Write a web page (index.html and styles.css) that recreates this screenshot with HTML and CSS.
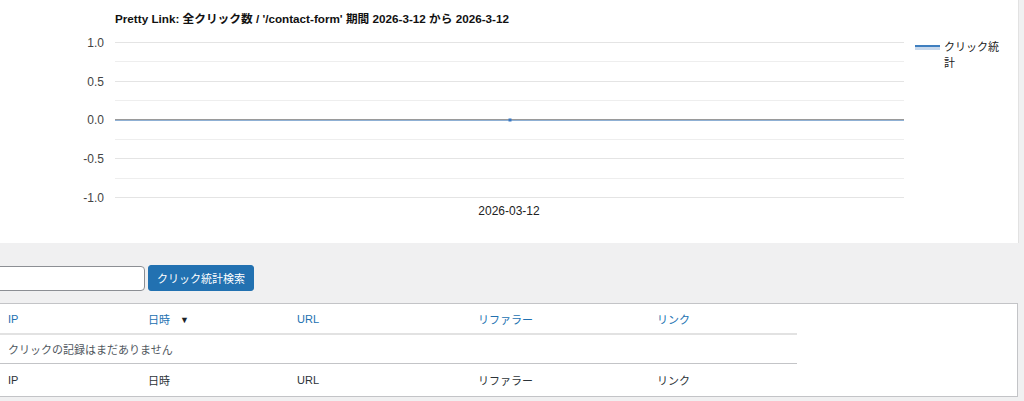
FILE: index.html
```html
<!DOCTYPE html>
<html lang="ja">
<head>
<meta charset="utf-8">
<title>Pretty Link クリック統計</title>
<link rel="stylesheet" href="styles.css">
</head>
<body>
<div class="chart-panel">
  <svg class="chart" width="1018" height="243" viewBox="0 0 1018 243" xmlns="http://www.w3.org/2000/svg">
    <text class="chart-title" x="115" y="23">Pretty Link: 全クリック数 / '/contact-form' 期間 2026-3-12 から 2026-3-12</text>
    <g class="grid">
      <line x1="115" y1="42.5" x2="904" y2="42.5"/>
      <line x1="115" y1="61.5" x2="904" y2="61.5" class="minor"/>
      <line x1="115" y1="81.5" x2="904" y2="81.5"/>
      <line x1="115" y1="100.5" x2="904" y2="100.5" class="minor"/>
      <line x1="115" y1="139.5" x2="904" y2="139.5" class="minor"/>
      <line x1="115" y1="158.5" x2="904" y2="158.5"/>
      <line x1="115" y1="178.5" x2="904" y2="178.5" class="minor"/>
      <line x1="115" y1="197.5" x2="904" y2="197.5"/>
    </g>
    <line class="zero" x1="115" y1="119.5" x2="904" y2="119.5"/>
    <line class="series" x1="115" y1="120.5" x2="904" y2="120.5"/>
    <rect class="point" x="508.5" y="118.5" width="3" height="3"/>
    <g class="ylab">
      <text x="104" y="47">1.0</text>
      <text x="104" y="86">0.5</text>
      <text x="104" y="124">0.0</text>
      <text x="104" y="163">-0.5</text>
      <text x="104" y="202">-1.0</text>
    </g>
    <text class="xlab" x="509" y="215">2026-03-12</text>
    <rect class="legend-swatch" x="915" y="46" width="25" height="4"/>
    <line class="legend-line" x1="915" y1="46" x2="940" y2="46"/>
    <text class="legend" x="944" y="51">クリック統</text>
    <text class="legend" x="944" y="67">計</text>
  </svg>
</div>

<div class="search">
  <input class="search-input" type="text" aria-label="検索">
  <button class="search-btn" type="button">クリック統計検索</button>
</div>

<div class="table-wrap">
  <table class="clicks">
    <thead>
      <tr>
        <th class="c-ip"><a>IP</a></th>
        <th class="c-date"><a>日時</a><span class="sort">▼</span></th>
        <th class="c-url"><a>URL</a></th>
        <th class="c-ref"><a>リファラー</a></th>
        <th class="c-link"><a>リンク</a></th>
      </tr>
    </thead>
    <tbody>
      <tr><td colspan="5" class="empty">クリックの記録はまだありません</td></tr>
    </tbody>
    <tfoot>
      <tr>
        <th>IP</th>
        <th>日時</th>
        <th>URL</th>
        <th>リファラー</th>
        <th>リンク</th>
      </tr>
    </tfoot>
  </table>
</div>
</body>
</html>
```
FILE: styles.css
```css
html, body {
  margin: 0;
  padding: 0;
}
body {
  background: #f0f0f1;
  font-family: "Liberation Sans", "Noto Sans CJK JP", sans-serif;
  color: #3c434a;
  width: 1024px;
  overflow: hidden;
}
.chart-panel {
  width: 1018px;
  height: 243px;
  background: #fff;
  border-right: 1px solid #e2e2e2;
}
.chart {
  display: block;
  font-family: "Liberation Sans", "Noto Sans CJK JP", sans-serif;
}
.chart-title {
  font-size: 11.7px;
  font-weight: bold;
  fill: #111;
}
.grid line {
  stroke: #e4e4e4;
  stroke-width: 1;
}
.grid line.minor {
  stroke: #eeeeee;
}
.zero {
  stroke: #9a9a9a;
  stroke-width: 1;
}
.series {
  stroke: #8fb0d4;
  stroke-width: 1;
}
.point {
  fill: #3a78c2;
}
.ylab text {
  font-size: 12px;
  fill: #444;
  text-anchor: end;
}
.xlab {
  font-size: 12px;
  fill: #222;
  text-anchor: middle;
}
.legend {
  font-size: 11px;
  fill: #222;
}
.legend-swatch {
  fill: #c9d9ec;
}
.legend-line {
  stroke: #3f7fbf;
  stroke-width: 2;
}
.search {
  display: flex;
  align-items: center;
  gap: 3px;
  padding: 22px 0 0 0;
  margin-left: -4px;
  height: 26px;
}
.search-input {
  box-sizing: border-box;
  width: 149px;
  height: 25px;
  border: 1px solid #8c8f94;
  border-radius: 4px;
  background: #fff;
  margin: 0;
}
.search-btn {
  box-sizing: border-box;
  height: 26px;
  width: 106px;
  padding: 0;
  margin: 0;
  background: #2271b1;
  border: 1px solid #2271b1;
  border-radius: 3px;
  color: #fff;
  font-family: "Liberation Sans", "Noto Sans CJK JP", sans-serif;
  font-size: 11px;
}
.table-wrap {
  box-sizing: border-box;
  margin-top: 12px;
  margin-left: -1px;
  width: 1019px;
  height: 94px;
  background: #fff;
  border: 1px solid #c3c4c7;
}
.clicks {
  border-collapse: collapse;
  table-layout: fixed;
  width: 797px;
  font-size: 11px;
}
.clicks th, .clicks td {
  text-align: left;
  font-weight: normal;
  padding: 0 0 0 8px;
  white-space: nowrap;
}
.clicks thead th {
  height: 29px;
  border-bottom: 2px solid #e2e2e2;
}
.clicks thead a {
  color: #2271b1;
}
.c-ip { width: 132px; }
.c-date { width: 141px; }
.c-url { width: 173px; }
.c-ref { width: 171px; }
.c-link { width: 140px; }
.sort {
  display: inline-block;
  margin-left: 10px;
  font-size: 9px;
  color: #1d2327;
  vertical-align: 1px;
}
.clicks td.empty {
  height: 28px;
  color: #50575e;
  border-bottom: 1px solid #c3c4c7;
}
.clicks tfoot th {
  height: 31px;
  color: #2c3338;
}
```
